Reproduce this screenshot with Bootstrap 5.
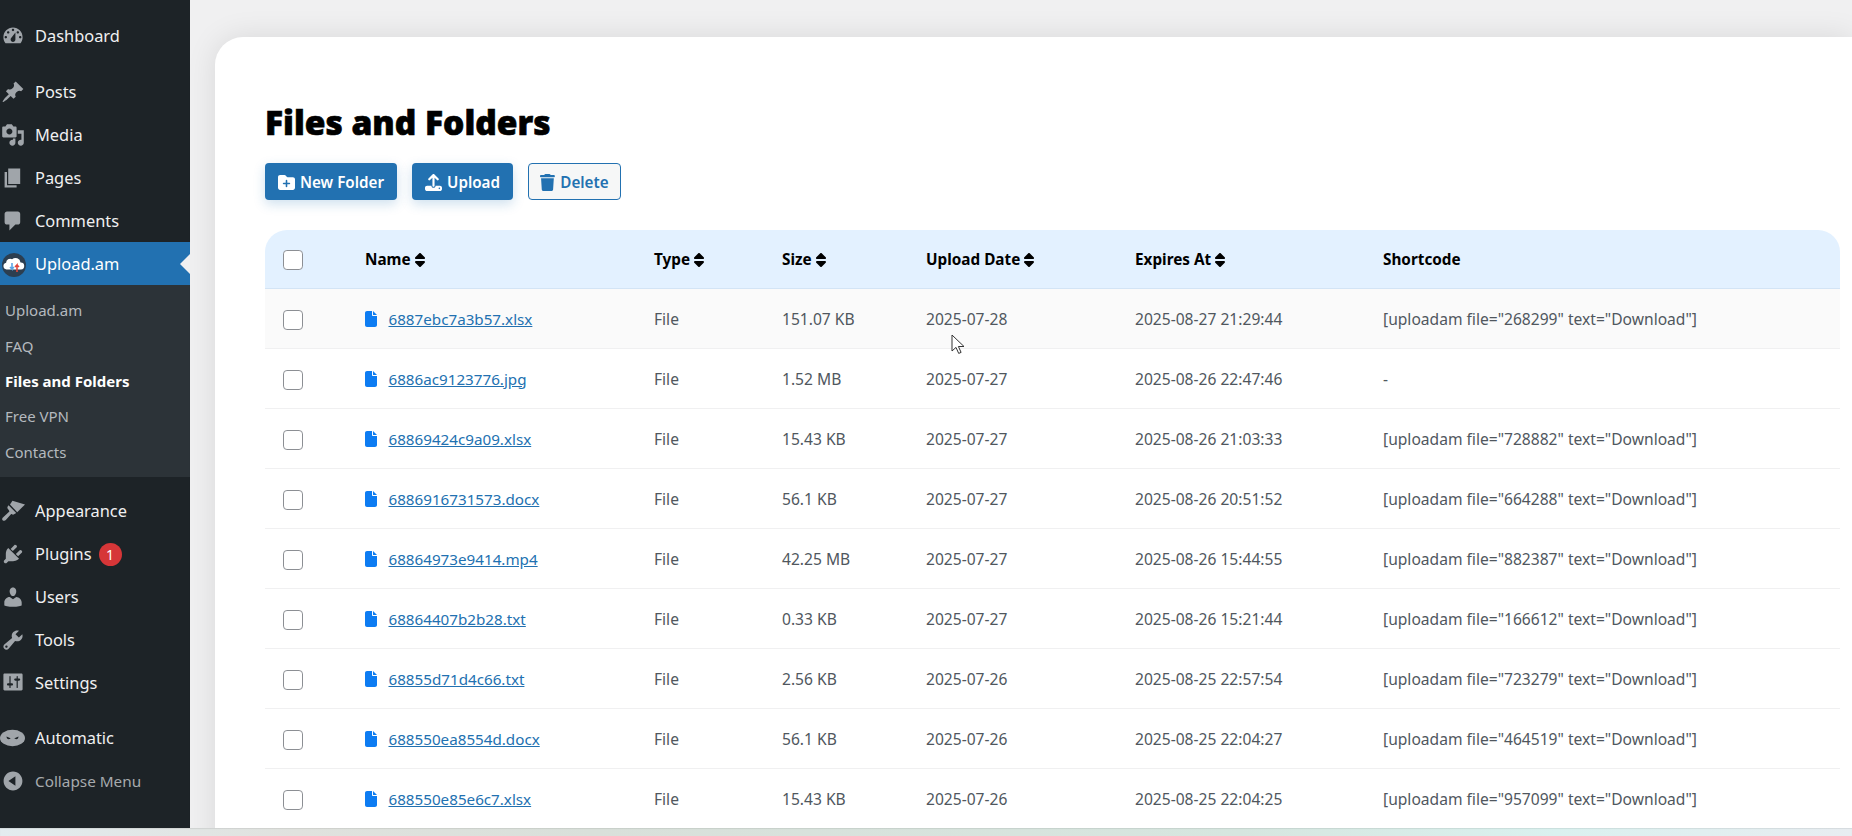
<!doctype html>
<html lang="en"><head><meta charset="utf-8"><title>Files and Folders</title>
<link href="https://cdn.jsdelivr.net/npm/bootstrap@5.3.0/dist/css/bootstrap.min.css" rel="stylesheet">
<style>
html,body{height:836px;overflow:hidden}
body{background:#f0f0f1;font-family:"Noto Sans","Open Sans",sans-serif;font-size:16px;color:#50575e}
.page-wrap{height:828px;overflow:hidden}
.side{width:190px;flex:none;background:#1d2327;padding-top:14.5px;height:828px}
.mitem{height:42.8px;color:#f0f0f1;font-size:16.4px;padding-left:35px;position:relative}
.mitem svg.di{position:absolute;left:1px;top:9px;width:24px;height:24px;fill:#a0a5aa;overflow:visible}
.mgap{margin-top:14px}
.mgap-s{margin-top:13px}
.mactive{background:#2271b1;color:#fff}
.mactive::after{content:"";position:absolute;right:0;top:50%;margin-top:-10px;border:10px solid transparent;border-right-color:#f0f0f1;border-left-width:0}
.subm{background:#2c3338;padding:7.5px 0;color:#b4b9be;font-size:15px}
.subm div{height:35.4px;padding-left:5px;display:flex;align-items:center}
.subm .cur{color:#fff;font-weight:700}
.pill{display:inline-flex;align-items:center;justify-content:center;width:23px;height:23px;border-radius:50%;background:#d63638;font-size:14px;color:#fff;margin-left:7px}
.muted-m{color:#a7aaad;font-size:15.3px}
.mainp{flex:1;padding:37px 0 0 25px;min-width:0}
.sheet{background:#fff;border-radius:28px 0 0 0;height:900px;padding:65px 12px 0 50px;box-shadow:0 0 30px rgba(0,0,0,.1)}
.ttl{font-family:"Noto Sans",sans-serif;font-weight:900;font-size:33.5px;line-height:40px;color:#000;-webkit-text-stroke:.7px #000;margin:0 0 21px}
.act{height:37px;padding:1px 0 0;font-size:15.2px;font-weight:600;border-radius:4px;display:inline-flex;align-items:center;justify-content:center;gap:5px}
.act svg{fill:currentColor;height:17px;width:auto}
.act-p{background:#2271b1;color:#fff;border:0;box-shadow:0 4px 12px rgba(34,113,177,.22)}
.act-o{background:#f6f7f7;color:#2271b1;border:1px solid #2271b1}
.w-nf{width:132px}.w-up{width:101px}.w-de{width:93px}
.ftab{width:1575px;margin:30px 0 0;table-layout:fixed;border-collapse:separate;border-spacing:0;font-size:15.6px}
.ftab th{background:#e3f1ff;color:#000;font-weight:700;height:59px;padding:1px 0 0;vertical-align:middle;border-bottom:1px solid #d3e4f5;font-size:15.3px}
.ftab th:first-child{border-radius:22px 0 0 0}
.ftab th:last-child{border-radius:0 22px 0 0}
.ftab th svg{height:16px;width:auto;fill:#000;margin-left:0;vertical-align:-3px}
.ftab td{height:60px;padding:2px 0 0;vertical-align:middle;border-bottom:1px solid #f0f0f1;color:#50575e;background:#fff}
.ftab tr.hov td{background:#fafafa}
.ftab a{color:#2271b1;font-size:15.2px}
.chk{display:block;width:20px;height:20px;margin:0 0 0 18px!important;border:1.5px solid #8c8f94;border-radius:5px;appearance:none;background:#fff}
.fic{fill:#0d7cf2;height:16px;width:auto;margin-right:11.5px;vertical-align:-2px}
.band{height:8px;background:linear-gradient(90deg,#e3ecef 0%,#e0e2de 16%,#d9e0da 32%,#d6e6df 67%,#daf1ef 84%,#e8edf1 100%);box-shadow:inset 0 1px 1px rgba(0,0,0,.08)}
.cursor{position:absolute;left:951px;top:334px;width:14px;height:21px;z-index:5}
.c1{width:100px}.c2{width:289px}.c3{width:128px}.c4{width:144px}.c5{width:209px}.c6{width:248px}
</style></head>
<body>
<div class="d-flex page-wrap">
<nav class="side">
<div class="mitem d-flex align-items-center"><svg class="di" viewBox="0 0 20 20"><path fill-rule="evenodd" d="M3.76 16h12.48c1.1-1.37 1.76-3.11 1.76-5 0-4.42-3.58-8-8-8s-8 3.58-8 8c0 1.89.66 3.63 1.76 5zM10 4c.55 0 1 .45 1 1s-.45 1-1 1-1-.45-1-1 .45-1 1-1zM6 6c.55 0 1 .45 1 1s-.45 1-1 1-1-.45-1-1 .45-1 1-1zm8 0c.55 0 1 .45 1 1s-.45 1-1 1-1-.45-1-1 .45-1 1-1zm-5.37 5.55L12 7v6c0 1.1-.9 2-2 2s-2-.9-2-2c0-.57.24-1.08.63-1.45zM4 10c.55 0 1 .45 1 1s-.45 1-1 1-1-.45-1-1 .45-1 1-1zm12 0c.55 0 1 .45 1 1s-.45 1-1 1-1-.45-1-1 .45-1 1-1z"/></svg>Dashboard</div>
<div class="mitem mgap d-flex align-items-center"><svg class="di" viewBox="0 0 20 20"><path d="M10.44 3.02l1.82-1.82 6.36 6.35-1.83 1.82c-1.05-.68-2.48-.57-3.41.36l-.75.75c-.92.93-1.04 2.35-.35 3.41l-1.83 1.82-2.41-2.41-2.8 2.79c-.42.42-3.38 2.71-3.8 2.29s1.86-3.39 2.28-3.81l2.79-2.79L4.1 9.36l1.83-1.82c1.05.69 2.48.57 3.4-.36l.75-.75c.93-.92 1.05-2.35.36-3.41z"/></svg>Posts</div>
<div class="mitem d-flex align-items-center"><svg class="di" viewBox="0 0 20 20"><path fill-rule="evenodd" d="M13 11V4c0-.55-.45-1-1-1h-1.67L9 1H5L3.67 3H2c-.55 0-1 .45-1 1v7c0 .55.45 1 1 1h10c.55 0 1-.45 1-1zM7 4.5c1.38 0 2.5 1.12 2.5 2.5S8.38 9.5 7 9.5 4.5 8.38 4.5 7 5.62 4.5 7 4.5zM14 6h5v10.5c0 1.38-1.12 2.5-2.5 2.5S14 17.88 14 16.5s1.12-2.5 2.5-2.5c.17 0 .34.02.5.05V9h-3V6zm-4 8.05V13h2v3.5c0 1.38-1.12 2.5-2.5 2.5S7 17.88 7 16.5 8.12 14 9.5 14c.17 0 .34.02.5.05z"/></svg>Media</div>
<div class="mitem d-flex align-items-center"><svg class="di" viewBox="0 0 20 20"><path d="M6 15V2h10v13H6zm-1 1h8v2H3V5h2v11z"/></svg>Pages</div>
<div class="mitem d-flex align-items-center"><svg class="di" viewBox="0 0 20 20"><path d="M5 2h9c1.1 0 2 .9 2 2v7c0 1.1-.9 2-2 2h-2l-5 5v-5H5c-1.1 0-2-.9-2-2V4c0-1.1.9-2 2-2z"/></svg>Comments</div>
<div class="mitem mactive d-flex align-items-center"><svg class="di" viewBox="0 0 24 24" style="fill:none"><circle cx="13" cy="14" r="12" fill="#2c3e50"/><path d="M5.500 18.500a3.400 3.400 0 0 1-.4-6.700 4 4 0 0 1 6-3.500 5 5 0 0 1 8.400 3.200 3.500 3.500 0 0 1 .4 7z" fill="#fff"/><path d="M11 12v6l-2-2M11 18l2-2" stroke="#5aa5e6" stroke-width="1.600"/><path d="M16 21v-7l-2 2M16 14l2 2" stroke="#e0483e" stroke-width="1.600"/></svg>Upload.am</div>
<div class="subm">
<div>Upload.am</div><div>FAQ</div><div class="cur">Files and Folders</div><div>Free VPN</div><div>Contacts</div>
</div>
<div class="mitem mgap-s d-flex align-items-center"><svg class="di" viewBox="0 0 20 20"><path d="M9.500 1.500L20 4.500l-6.500 6.500L7.500 4.500z"/><path d="M6.300 5.200l6.400 6.500-2.200 1.300c-1 .3-1.500-.5-2-.5L4 17.500c-1 1.200-2.800.5-3-.5-.2-1 .5-1.500 1.500-2.500l4.500-4c0-1-1-1.500-1.500-2.500-.5-1 0-2 .8-2.800z"/></svg>Appearance</div>
<div class="mitem d-flex align-items-center"><svg class="di" viewBox="0 0 20 20"><path d="M13.110 4.360L9.870 7.600 8 5.730l3.240-3.240c.35-.34 1.050-.2 1.560.32.52.51.66 1.210.31 1.550zm-8 1.770l.91-1.120 9.010 9.010-1.190.84c-.71.71-2.630 1.160-3.820 1.160H6.140L4.900 17.260c-.59.59-1.540.59-2.120 0-.59-.58-.59-1.530 0-2.120l1.240-1.240v-3.880c0-1.130.4-3.190 1.090-3.890zm7.260 3.970l3.240-3.240c.34-.35 1.040-.21 1.550.31.52.51.66 1.210.31 1.550l-3.240 3.250z"/></svg>Plugins<span class="pill">1</span></div>
<div class="mitem d-flex align-items-center"><svg class="di" viewBox="0 0 20 20"><path d="M10 9.250c-2.270 0-2.730-3.440-2.730-3.440C7 4.020 7.820 2 9.970 2c2.160 0 2.980 2.020 2.710 3.810 0 0-.41 3.440-2.680 3.440zm0 2.570L12.720 10c2.390 0 4.520 2.330 4.520 4.530v2.490s-3.650 1.130-7.240 1.130c-3.650 0-7.240-1.130-7.240-1.130v-2.490c0-2.250 1.940-4.480 4.470-4.480z"/></svg>Users</div>
<div class="mitem d-flex align-items-center"><svg class="di" viewBox="0 0 20 20"><path fill-rule="evenodd" d="M16.680 9.770c-1.340 1.340-3.300 1.670-4.950.99l-5.410 6.520c-.99.99-2.590.99-3.580 0s-.99-2.590 0-3.570l6.520-5.420c-.68-1.650-.35-3.610.99-4.950 1.280-1.280 3.120-1.620 4.720-1.060l-2.890 2.890 2.820 2.820 2.860-2.870c.53 1.580.18 3.390-1.080 4.650zM3.810 16.210c.4.39 1.040.39 1.430 0 .4-.4.4-1.040 0-1.430-.39-.4-1.030-.4-1.430 0-.39.39-.39 1.030 0 1.430z"/></svg>Tools</div>
<div class="mitem d-flex align-items-center"><svg class="di" viewBox="0 0 20 20"><path fill-rule="evenodd" d="M18 16V4c0-.55-.45-1-1-1H3c-.55 0-1 .45-1 1v12c0 .55.45 1 1 1h14c.55 0 1-.45 1-1zM8 11h1c.55 0 1 .45 1 1s-.45 1-1 1H8v1.500c0 .28-.22.5-.5.5s-.5-.22-.5-.5V13H6c-.55 0-1-.45-1-1s.45-1 1-1h1V5.500c0-.28.22-.5.5-.5s.5.22.5.5V11zm5-2h-1c-.55 0-1-.45-1-1s.45-1 1-1h1V5.500c0-.28.22-.5.5-.5s.5.22.5.5V7h1c.55 0 1 .45 1 1s-.45 1-1 1h-1v5.500c0 .28-.22.5-.5.5s-.5-.22-.5-.5V9z"/></svg>Settings</div>
<div class="mitem mgap-s d-flex align-items-center"><svg class="di" viewBox="0 0 24 24"><ellipse cx="11.500" cy="12" rx="12.500" ry="8.200"/><path d="M5.500 10.500l4 1.800c-.4 1.200-2.700 1.200-3.400.2-.4-.6-.6-1.200-.6-2zM17.500 10.500l-4 1.800c.4 1.200 2.700 1.200 3.400.2.4-.6.600-1.200.6-2z" fill="#1d2327"/></svg>Automatic</div>
<div class="mitem muted-m d-flex align-items-center"><svg class="di" viewBox="0 0 20 20"><path fill-rule="evenodd" d="M10 2.160c4.330 0 7.840 3.510 7.840 7.840s-3.510 7.840-7.840 7.840S2.160 14.330 2.160 10 5.710 2.160 10 2.160zm2 11.720V6.120L6.180 9.970z"/></svg>Collapse Menu</div>
</nav>
<main class="mainp">
<div class="sheet">
<h1 class="ttl">Files and Folders</h1>
<div class="d-flex" style="gap:15px">
<button class="btn act act-p w-nf"><svg viewBox="0 0 512 512"><path d="M512 416c0 35.300-28.700 64-64 64H64c-35.300 0-64-28.700-64-64V96C0 60.700 28.700 32 64 32H192c20.100 0 39.100 9.500 51.200 25.600l19.200 25.600c6 8.100 15.500 12.800 25.600 12.800H448c35.300 0 64 28.700 64 64V416zM232 376c0 13.300 10.700 24 24 24s24-10.700 24-24V312h64c13.300 0 24-10.700 24-24s-10.700-24-24-24H280V200c0-13.300-10.700-24-24-24s-24 10.700-24 24v64H168c-13.300 0-24 10.700-24 24s10.700 24 24 24h64v64z"/></svg>New Folder</button>
<button class="btn act act-p w-up"><svg viewBox="0 0 512 512"><path d="M288 109.300V352c0 17.700-14.300 32-32 32s-32-14.300-32-32V109.300l-73.400 73.400c-12.500 12.500-32.800 12.500-45.300 0s-12.500-32.800 0-45.300l128-128c12.500-12.500 32.800-12.500 45.300 0l128 128c12.500 12.500 12.500 32.800 0 45.300s-32.800 12.500-45.300 0L288 109.300zM64 352H192c0 35.300 28.700 64 64 64s64-28.700 64-64H448c35.300 0 64 28.700 64 64v32c0 35.300-28.700 64-64 64H64c-35.300 0-64-28.700-64-64V416c0-35.300 28.700-64 64-64zM432 456a24 24 0 1 0 0-48 24 24 0 1 0 0 48z"/></svg>Upload</button>
<button class="btn act act-o w-de"><svg viewBox="0 0 448 512"><path d="M135.200 17.700L128 32H32C14.300 32 0 46.300 0 64S14.300 96 32 96H416c17.700 0 32-14.300 32-32s-14.300-32-32-32H320l-7.200-14.300C307.400 6.800 296.300 0 284.200 0H163.800c-12.100 0-23.200 6.800-28.600 17.700zM416 128H32L53.200 467c1.600 25.300 22.600 45 47.900 45H346.900c25.300 0 46.300-19.700 47.900-45L416 128z"/></svg>Delete</button>
</div>
<table class="ftab">
<colgroup><col class="c1"><col class="c2"><col class="c3"><col class="c4"><col class="c5"><col class="c6"><col></colgroup>
<thead><tr>
<th><input type="checkbox" class="form-check-input chk" aria-label="all"></th>
<th>Name <svg viewBox="0 0 320 512"><use href="#srt"/></svg></th>
<th>Type <svg viewBox="0 0 320 512"><use href="#srt"/></svg></th>
<th>Size <svg viewBox="0 0 320 512"><use href="#srt"/></svg></th>
<th>Upload Date <svg viewBox="0 0 320 512"><use href="#srt"/></svg></th>
<th>Expires At <svg viewBox="0 0 320 512"><use href="#srt"/></svg></th>
<th>Shortcode</th>
</tr></thead>
<tbody>
<tr class="hov"><td><input type="checkbox" class="form-check-input chk" aria-label="row"></td><td><svg class="fic" viewBox="0 0 384 512"><use href="#fil"/></svg><a href="#">6887ebc7a3b57.xlsx</a></td><td>File</td><td>151.07 KB</td><td>2025-07-28</td><td>2025-08-27 21:29:44</td><td>[uploadam file="268299" text="Download"]</td></tr>
<tr><td><input type="checkbox" class="form-check-input chk" aria-label="row"></td><td><svg class="fic" viewBox="0 0 384 512"><use href="#fil"/></svg><a href="#">6886ac9123776.jpg</a></td><td>File</td><td>1.52 MB</td><td>2025-07-27</td><td>2025-08-26 22:47:46</td><td>-</td></tr>
<tr><td><input type="checkbox" class="form-check-input chk" aria-label="row"></td><td><svg class="fic" viewBox="0 0 384 512"><use href="#fil"/></svg><a href="#">68869424c9a09.xlsx</a></td><td>File</td><td>15.43 KB</td><td>2025-07-27</td><td>2025-08-26 21:03:33</td><td>[uploadam file="728882" text="Download"]</td></tr>
<tr><td><input type="checkbox" class="form-check-input chk" aria-label="row"></td><td><svg class="fic" viewBox="0 0 384 512"><use href="#fil"/></svg><a href="#">6886916731573.docx</a></td><td>File</td><td>56.1 KB</td><td>2025-07-27</td><td>2025-08-26 20:51:52</td><td>[uploadam file="664288" text="Download"]</td></tr>
<tr><td><input type="checkbox" class="form-check-input chk" aria-label="row"></td><td><svg class="fic" viewBox="0 0 384 512"><use href="#fil"/></svg><a href="#">68864973e9414.mp4</a></td><td>File</td><td>42.25 MB</td><td>2025-07-27</td><td>2025-08-26 15:44:55</td><td>[uploadam file="882387" text="Download"]</td></tr>
<tr><td><input type="checkbox" class="form-check-input chk" aria-label="row"></td><td><svg class="fic" viewBox="0 0 384 512"><use href="#fil"/></svg><a href="#">68864407b2b28.txt</a></td><td>File</td><td>0.33 KB</td><td>2025-07-27</td><td>2025-08-26 15:21:44</td><td>[uploadam file="166612" text="Download"]</td></tr>
<tr><td><input type="checkbox" class="form-check-input chk" aria-label="row"></td><td><svg class="fic" viewBox="0 0 384 512"><use href="#fil"/></svg><a href="#">68855d71d4c66.txt</a></td><td>File</td><td>2.56 KB</td><td>2025-07-26</td><td>2025-08-25 22:57:54</td><td>[uploadam file="723279" text="Download"]</td></tr>
<tr><td><input type="checkbox" class="form-check-input chk" aria-label="row"></td><td><svg class="fic" viewBox="0 0 384 512"><use href="#fil"/></svg><a href="#">688550ea8554d.docx</a></td><td>File</td><td>56.1 KB</td><td>2025-07-26</td><td>2025-08-25 22:04:27</td><td>[uploadam file="464519" text="Download"]</td></tr>
<tr><td><input type="checkbox" class="form-check-input chk" aria-label="row"></td><td><svg class="fic" viewBox="0 0 384 512"><use href="#fil"/></svg><a href="#">688550e85e6c7.xlsx</a></td><td>File</td><td>15.43 KB</td><td>2025-07-26</td><td>2025-08-25 22:04:25</td><td>[uploadam file="957099" text="Download"]</td></tr>
</tbody></table>
</div>
</main>
</div>
<div class="band"></div>
<svg class="cursor" viewBox="0 0 14 21"><path d="M1 1v16l4-3.600 2.700 6 2.400-1-2.700-5.900H13z" fill="#fff" stroke="#333" stroke-width="1"/></svg>
<svg width="0" height="0" class="d-block"><defs>
<path id="srt" d="M137.400 41.400c12.500-12.500 32.800-12.500 45.300 0l128 128c9.200 9.200 11.900 22.900 6.900 34.900s-16.600 19.800-29.600 19.800H32c-12.900 0-24.600-7.800-29.600-19.800s-2.200-25.700 6.900-34.900l128-128zm0 429.300l-128-128c-9.200-9.200-11.900-22.900-6.900-34.900s16.600-19.800 29.600-19.800H288c12.900 0 24.600 7.800 29.600 19.800s2.200 25.700-6.900 34.900l-128 128c-12.500 12.500-32.800 12.500-45.300 0z"/>
<path id="fil" d="M0 64C0 28.700 28.700 0 64 0H224V128c0 17.700 14.300 32 32 32H384V448c0 35.300-28.700 64-64 64H64c-35.300 0-64-28.700-64-64V64zm384 64H256V0L384 128z"/>
</defs></svg>
<script src="https://cdn.jsdelivr.net/npm/bootstrap@5.3.0/dist/js/bootstrap.bundle.min.js"></script>
</body></html>
